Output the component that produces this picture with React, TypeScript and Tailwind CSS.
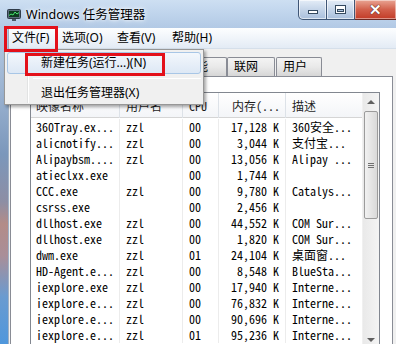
type Row = { name: string; user: string; cpu: string; mem: string; desc: string };

const rows: Row[] = [
  { name: '360Tray.ex...', user: 'zzl', cpu: '00', mem: '17,128 K', desc: '360安全...' },
  { name: 'alicnotify...', user: 'zzl', cpu: '00', mem: '3,044 K', desc: '支付宝...' },
  { name: 'Alipaybsm....', user: 'zzl', cpu: '00', mem: '13,056 K', desc: 'Alipay ...' },
  { name: 'atieclxx.exe', user: '', cpu: '00', mem: '1,744 K', desc: '' },
  { name: 'CCC.exe', user: 'zzl', cpu: '00', mem: '9,780 K', desc: 'Catalys...' },
  { name: 'csrss.exe', user: '', cpu: '00', mem: '2,456 K', desc: '' },
  { name: 'dllhost.exe', user: 'zzl', cpu: '00', mem: '44,552 K', desc: 'COM Sur...' },
  { name: 'dllhost.exe', user: 'zzl', cpu: '00', mem: '1,820 K', desc: 'COM Sur...' },
  { name: 'dwm.exe', user: 'zzl', cpu: '01', mem: '24,104 K', desc: '桌面窗...' },
  { name: 'HD-Agent.e...', user: 'zzl', cpu: '00', mem: '8,548 K', desc: 'BlueSta...' },
  { name: 'iexplore.exe', user: 'zzl', cpu: '00', mem: '17,940 K', desc: 'Interne...' },
  { name: 'iexplore.e...', user: 'zzl', cpu: '00', mem: '76,832 K', desc: 'Interne...' },
  { name: 'iexplore.e...', user: 'zzl', cpu: '00', mem: '90,696 K', desc: 'Interne...' },
  { name: 'iexplore.e...', user: 'zzl', cpu: '01', mem: '95,236 K', desc: 'Interne...' },
];

// tabs left of 性能 sit fully under the open menu, so they carry no label here
const tabs = [
  { label: '', w: 'w-[63px]' },
  { label: '', w: 'w-[48px]', active: true },
  { label: '', w: 'w-[51px]' },
  { label: '性能', w: 'w-[50px]' },
  { label: '联网', w: 'w-[48px]' },
  { label: '用户', w: 'w-[46px] ml-[1px]' },
];

const ui = "font-['Noto_Sans','Noto_Sans_CJK_SC',sans-serif]";
const mono = "font-['Noto_Sans_Mono_CJK_SC','Liberation_Mono',monospace]";

const TaskIcon = () => (
  <svg width="14" height="12" viewBox="0 0 14 12">
    <rect x="0.5" y="0.5" width="13" height="9" rx="1" fill="#5b6b7d" stroke="#2f3b48" />
    <rect x="2" y="2" width="10" height="6" fill="#0d3b1f" />
    <path d="M2 6.5 L4 5 L6 6 L8 3 L10 5 L12 3.5" stroke="#47e36e" strokeWidth="1" fill="none" />
    <rect x="5" y="10" width="4" height="2" fill="#4a5866" />
  </svg>
);

const CaptionButtons = () => (
  <div className="flex h-[20px]">
    <div className="w-[29px] h-full rounded-bl-[5px] border border-t-0 border-[#3f5676] bg-gradient-to-b from-[#e4edf7] via-[#c5d5e9] to-[#a9bfdc] shadow-[inset_0_0_0_1px_rgba(255,255,255,0.6)] flex items-end justify-center pb-[5px]">
      <div className="w-[10px] h-[4px] bg-white border border-[#34495f]" />
    </div>
    <div className="w-[28px] h-full border-b border-r border-[#3f5676] bg-gradient-to-b from-[#e4edf7] via-[#c5d5e9] to-[#a9bfdc] shadow-[inset_0_0_0_1px_rgba(255,255,255,0.6)] flex items-center justify-center">
      <div className="w-[11px] h-[9px] border border-[#34495f] bg-white p-[1px] pt-[3px]">
        <div className="w-full h-full border border-[#34495f] bg-[#aac0db]" />
      </div>
    </div>
    <div className="w-[41px] h-full border-b border-[#6b2a24] bg-gradient-to-b from-[#e8a493] via-[#d2604c] to-[#c23a26] shadow-[inset_0_0_0_1px_rgba(255,255,255,0.45)] flex items-center justify-center">
      <span className={`${ui} text-[15px] leading-none font-bold text-white [text-shadow:0_0_1px_#4a1510,0_0_1px_#4a1510]`}>✕</span>
    </div>
  </div>
);

const Scrollbar = () => (
  <div className="w-[17px] flex flex-col bg-gradient-to-r from-[#e9e9e9] to-[#f4f4f4] border-l border-[#f0f0f0]">
    <div className="h-[18px] flex items-center justify-center">
      <div className="w-0 h-0 border-l-[4px] border-r-[4px] border-b-[4px] border-l-transparent border-r-transparent border-b-[#606060]" />
    </div>
    <div className="mx-[1px] h-[108px] rounded-[2px] border border-[#9b9b9b] bg-gradient-to-r from-[#f1f1f1] to-[#d9d9d9] flex flex-col items-center justify-center gap-[1px]">
      <div className="w-[6px] h-px bg-[#707070]" />
      <div className="w-[6px] h-px bg-[#707070]" />
      <div className="w-[6px] h-px bg-[#707070]" />
    </div>
    <div className="flex-1" />
    <div className="h-[14px] flex items-start justify-center pt-[8px]">
      <div className="w-0 h-0 border-l-[4px] border-r-[4px] border-t-[4px] border-l-transparent border-r-transparent border-t-[#606060]" />
    </div>
  </div>
);

const cols = 'grid grid-cols-[89px_63px_36px_67px_76px]';

export default function App() {
  return (
    <div className={`${ui} relative w-[396px] h-[344px] overflow-hidden bg-[#bcd1ea]`}>
      {/* title bar */}
      <div className="h-[28px] flex items-start bg-gradient-to-b from-[#cddff2] via-[#bfd4ec] to-[#b2c9e5]">
        <div className="flex items-center gap-[5px] pl-[7px] pt-[8px]">
          <TaskIcon />
          <span className="text-[12.5px] leading-[14px] text-black [text-shadow:0_0_6px_#ffffff,0_0_3px_#ffffff]">
            Windows 任务管理器
          </span>
        </div>
        <div className="ml-auto">
          <CaptionButtons />
        </div>
      </div>

      <div className="flex h-[316px]">
        <div className="w-[8px] bg-[linear-gradient(to_bottom,#b6cbe4_0%,#9bb3d1_20%,#7b97bb_40%,#8d8ea4_55%,#b38c88_62%,#a98e98_72%,#6a9bd0_85%,#4f97dc_100%)]" />
        <div className="flex-1 flex flex-col bg-[#f0f0f0] border-l border-[#9fb0c4]">
          {/* menu bar */}
          <div className="h-[21px] flex items-center text-[12px] text-black bg-gradient-to-b from-[#fdfeff] to-[#e3ebf5] border-b border-[#d5dfea]">
            <div className="w-[51px] pl-[3px]">文件(F)</div>
            <div className="w-[55px] pl-[2px]">选项(O)</div>
            <div className="w-[55px] pl-[2px]">查看(V)</div>
            <div className="pl-[2px]">帮助(H)</div>
          </div>

          {/* tabs */}
          <div className="h-[27px] flex items-end pl-[6px] text-[12px]">
            {tabs.map((t, i) =>
              t.active ? (
                <div key={i} className={`${t.w} h-[22px] -mb-px relative bg-white border border-b-0 border-[#898c95] rounded-t-[2px] pl-[6px] leading-[20px]`}>
                  {t.label}
                </div>
              ) : (
                <div key={i} className={`${t.w} h-[19px] bg-gradient-to-b from-[#f4f4f4] via-[#e9e9e9] to-[#d6d6d6] border border-b-0 border-[#898c95] rounded-t-[2px] pl-[6px] leading-[17px] text-black`}>
                  {t.label}
                </div>
              )
            )}
          </div>

          {/* tab page */}
          <div className="flex-1 ml-[1px] mr-[3px] bg-white border border-b-0 border-[#898c95] flex flex-col">
            <div className="ml-[19px] mr-[12px] mt-[15px] flex-1 border border-b-0 border-[#828790] bg-white flex">
              <div className="flex-1 flex flex-col">
                <div className={`${cols} h-[25px] text-[12px] text-[#1e1e1e] bg-gradient-to-b from-white to-[#f3f5f8] border-b border-[#d5d5d5]`}>
                  <div className={`${mono} pl-[5px] leading-[25px] border-r border-[#dde2e8]`}>映像名称</div>
                  <div className={`${mono} pl-[6px] leading-[25px] border-r border-[#dde2e8]`}>用户名</div>
                  <div className={`${mono} pl-[6px] leading-[25px] border-r border-[#dde2e8]`}>CPU</div>
                  <div className={`${mono} pr-[5px] text-right leading-[25px] border-r border-[#dde2e8]`}>内存(...</div>
                  <div className={`${mono} pl-[6px] leading-[25px]`}>描述</div>
                </div>
                <div className={`${mono} pt-px text-[12px] text-black`}>
                  {rows.map((r, i) => (
                    <div key={i} className={`${cols} h-[16px] leading-[16px] whitespace-nowrap`}>
                      <div className="pl-[5px] border-r border-[#ececec]">{r.name}</div>
                      <div className="pl-[6px] border-r border-[#ececec]">{r.user}</div>
                      <div className="pl-[6px] border-r border-[#ececec]">{r.cpu}</div>
                      <div className="pr-[6px] text-right border-r border-[#ececec]">{r.mem}</div>
                      <div className="pl-[6px] overflow-hidden">{r.desc}</div>
                    </div>
                  ))}
                </div>
              </div>
              <Scrollbar />
            </div>
          </div>
        </div>
      </div>

      {/* File menu dropdown */}
      <div className="absolute z-20 left-[4px] top-[49px] w-[200px] h-[56px] bg-[#f0f0f0] border border-[#979797] shadow-[2px_2px_3px_rgba(0,0,0,0.35)] text-[12px] text-black">
        <div className="absolute left-[22px] top-[1px] bottom-[1px] w-px bg-[#e2e3e3]" />
        <div className="absolute left-[23px] top-[1px] bottom-[1px] w-px bg-white" />
        <div className="relative pt-[2px] px-[2px]">
          <div className="h-[22px] rounded-[3px] border border-[#a8c6e6] bg-gradient-to-b from-[#f3f7fc] to-[#dde8f5] pl-[33px] leading-[20px]">
            新建任务(运行...)(N)
          </div>
          <div className="h-[8px] flex items-center pl-[26px]">
            <div className="flex-1 h-px bg-[#e0e0e0] border-b border-white" />
          </div>
          <div className="h-[21px] pl-[34px] leading-[21px]">退出任务管理器(X)</div>
        </div>
      </div>

      {/* red annotation boxes */}
      <div className="absolute z-30 left-[4px] top-[26px] w-[54px] h-[26px] border-[3px] border-[#e3101a]" />
      <div className="absolute z-30 left-[25px] top-[53px] w-[140px] h-[23px] border-[3px] border-[#e3101a]" />
    </div>
  );
}
